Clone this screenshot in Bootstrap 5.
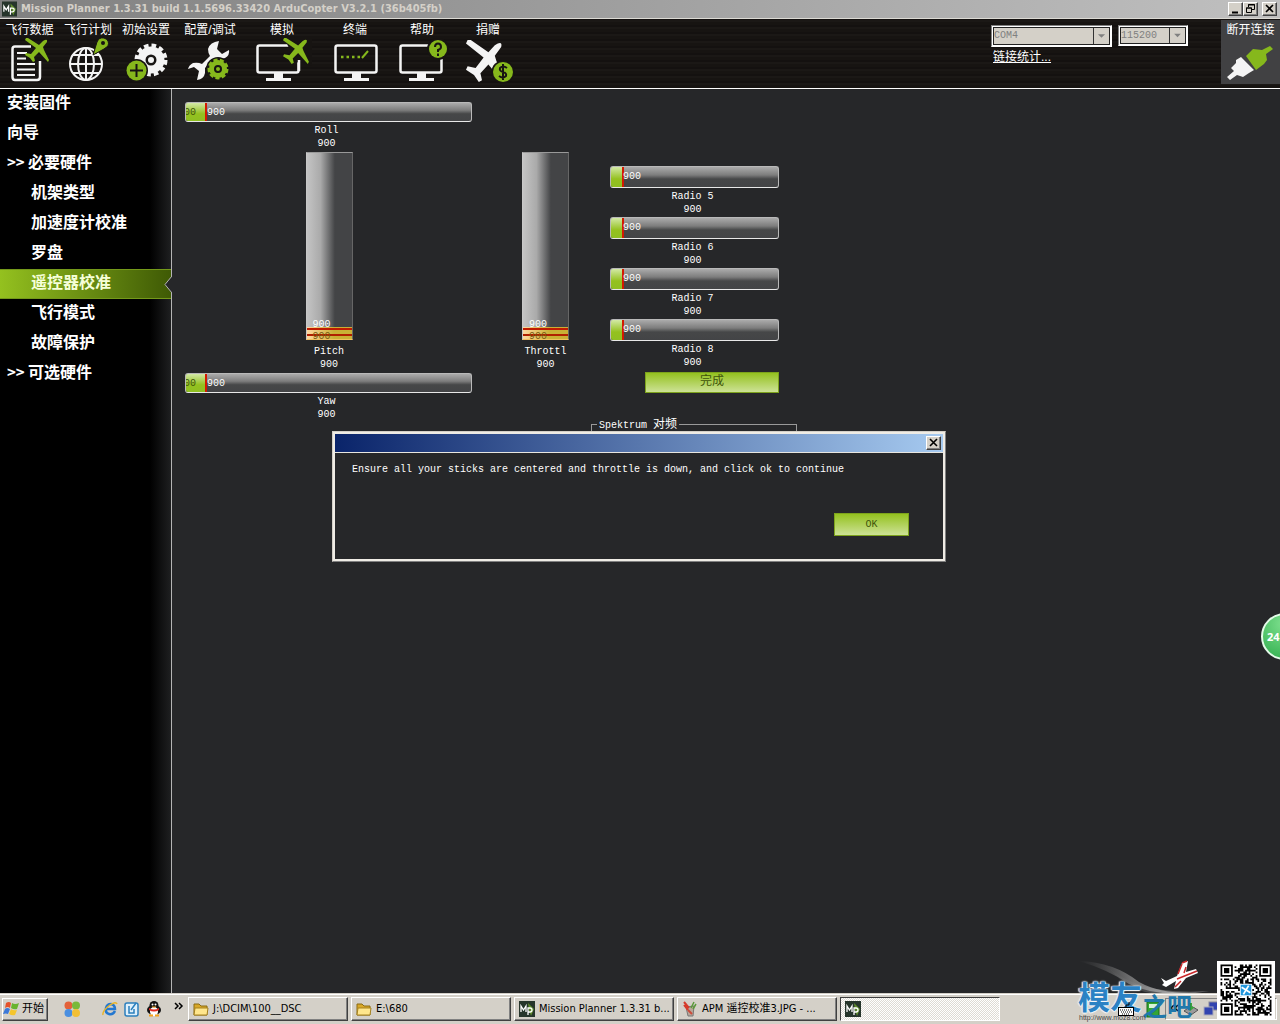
<!DOCTYPE html>
<html lang="zh-CN">
<head>
<meta charset="utf-8">
<meta name="viewport" content="width=device-width, initial-scale=1">
<title>Mission Planner 1.3.31</title>
<link href="https://cdn.jsdelivr.net/npm/bootstrap@5.3.0/dist/css/bootstrap.min.css" rel="stylesheet">
<style>
:root{--face:#d4d0c8;--ui:"DejaVu Sans Condensed","Noto Sans CJK SC",sans-serif;--song:"Liberation Mono","Noto Sans CJK SC",monospace;--cjk:"Liberation Sans","Noto Sans CJK SC",sans-serif}
body{background:#262729;font:12px/16px var(--cjk);color:#fff}
button{border:0;padding:0;background:none;color:inherit;font:inherit}
svg{display:block;flex:none}
.shell{overflow:hidden}
.titlebar{height:19px;background:linear-gradient(90deg,#808080,#c0c0c0);border-bottom:1px solid #dcdad4;padding:0 3px 0 2px}
.titlebar h1{font:bold 11px/18px var(--ui);color:var(--face);margin:0}
.winbtn{width:15px;height:14px;background:var(--face);border:1px solid;border-color:#fff #404040 #404040 #fff;box-shadow:inset -1px -1px #808080}
.toolbar{height:70px;background:repeating-linear-gradient(0deg,#171412 0 3px,#1b1816 3px 5px,#141110 5px 7px);border-bottom:1px solid #fff}
.tool{padding-top:3px;text-align:center;white-space:nowrap}
.tool svg{margin:0 auto}
.t58{width:58px}.t59{width:59px}.t62{width:62px}.t70{width:70px}.t72{width:72px}.t74{width:74px}
.links{width:214px;padding:6px 0 0}
.combo{position:relative;border:1px solid;border-color:#808080 #fff #fff #808080;padding:1px;background:#fff}
.port{width:121px}.baud{width:70px}.pair{gap:6px}
.combo select{appearance:none;display:block;width:100%;height:17px;padding:0;border:1px solid #222;border-radius:0;background:var(--face);color:#808080;font:10px/14px var(--song);opacity:1}
.combo.port select{height:18px}
.combo svg{position:absolute;right:2px;top:2px;height:calc(100% - 4px);width:16px;background:var(--face);border-left:1px solid #333;pointer-events:none}
.stats{display:inline-block;color:#fff;padding:2px 0 0 2px}
.connect{width:59px;height:64px;background:#414143;margin-top:1px;padding-top:2px}
.side{width:172px;background:linear-gradient(90deg,#000 150px,#1d1e1f 170px);border-right:1px solid #b5b5b5}
.side a{display:block;height:30px;padding:0 0 0 7px;font:bold 16px/25px "Noto Sans CJK SC",sans-serif;color:#fff;text-decoration:none;white-space:nowrap}
.side a.sub{padding-left:31px}
.side a.act{position:relative;background:linear-gradient(90deg,#94c11f,#3f5a05);border:solid #74991a;border-width:1px 0;line-height:23px;color:#f6ffd8}
.side a.act svg{position:absolute;right:-1px;top:6px}
.chev{display:inline-block;width:21px;font-size:15px}
.stage{position:relative;font:10px/13px var(--song)}
.panel{padding:13px}
.colroll{width:287px}.colthr{width:47px;margin:50px 22px 0 50px}.colrad{width:206px;padding-top:64px}
.radios{padding:0 18px 0 19px;gap:1px}
.meter{position:relative;height:20px;border:1px solid #b9b9b9;border-bottom-color:#e8e8e8;border-radius:3px;overflow:hidden;background:linear-gradient(#ababab,#7d7d7d 40%,#464748 60%,#434446)}
.radios .meter{height:22px}
.meter i{display:block;height:100%;border-right:2px solid #d21a00;background:linear-gradient(#d3e9a6,#94c11f 60%,#8fbf22)}
.meter span{position:absolute;left:21px;top:3px}
.meter .cut{left:-2px;color:#40540a}
.radios .meter span{left:12px}
.capt{text-align:center;margin-top:2px;padding-right:4px}
.pitch{margin:2px 0;padding-left:1px}
.tower{position:relative;width:47px;height:188px;border:1px solid #999;border-color:#999 #666 #f0c060 #c8c8c8;overflow:hidden;background:linear-gradient(90deg,#c4c4c4,#aaa 30%,#434446 62%,#434446)}
.tower i{position:absolute;left:0;right:0;bottom:0;background:linear-gradient(transparent 0 1px,#c01c00 1px 3px,transparent 3px 7px,#b02000 7px 9px,transparent 9px),linear-gradient(90deg,#ffd8a0,#c9b035 60%)}
.tower span{position:absolute;left:6px;bottom:8px;z-index:1}
.tower .cut{bottom:-4px;color:#7a5a10}
.tower + .capt{margin-top:5px;padding:0;white-space:nowrap}
.green{background:linear-gradient(#94c11f,#cde296);border:1px solid #7da31c;color:#40540a;display:block;text-align:center}
.done{width:134px;height:21px;margin:3px 18px 0 auto;padding-bottom:3px;font:12px/16px var(--cjk)}
.bindbox{height:90px;min-width:0;margin-top:23px;border:1px solid #999;padding:0}
.bindbox legend{float:none;width:auto;margin:0 0 0 5px;padding:0 2px;font:10px/14px var(--song)}
.bindbox legend b{font:12px/14px "Noto Sans CJK SC",sans-serif}
.dlg{position:absolute;left:160px;top:342px;width:614px;height:131px;border:1px solid;border-color:var(--face) #808080 #808080 var(--face);box-shadow:inset 0 0 0 2px #efece5;background:#262729;padding:2px}
.dlgbar{height:19px;background:linear-gradient(90deg,#0a246a,#a6caf0);border-bottom:1px solid #e8e6e0;padding-right:2px}
.dlg p{margin:0;padding:10px 17px 0}
.ok{width:75px;height:23px;margin:37px 34px 0 auto}
.float24{position:absolute;right:-28px;top:613px;width:47px;height:47px;border-radius:50%;border:2px solid #e4fbe9;background:radial-gradient(circle at 50% 20%,#7fe08f,#2fae4d);font:bold 11px/43px "Noto Sans",sans-serif;padding-left:4px;text-align:left}
.taskbar{position:relative;height:30px;background:var(--face);border-top:1px solid #fff;box-shadow:0 -1px #d4d0c8;color:#000;font:11px/18px var(--ui);padding:2px 3px 3px 2px}
.raised{border:1px solid;border-color:#fff #404040 #404040 #fff;box-shadow:inset -1px -1px #808080}
.start{width:46px;height:23px;gap:2px}
.task{width:160px;height:24px;padding:0 4px;white-space:nowrap;gap:4px}
.quick{gap:6px;margin:0 12px 0 22px}
.tasks{gap:3px}
.pressed{border:1px solid;border-color:#404040 #fff #fff #404040;background:repeating-conic-gradient(#fff 0 25%,#dedbd4 0 50%) 0 0/2px 2px}
.kbd{position:relative;z-index:2;top:0}
.tray{width:112px;height:22px;border:1px solid;border-color:#808080 #fff #fff #808080;padding:0 4px;gap:4px}
.mark-art{position:absolute;right:0;bottom:0;z-index:1;width:206px;height:66px;color:#1c75bd;pointer-events:none}
.mark-art span{position:absolute;white-space:nowrap;font-family:"Noto Sans CJK SC",sans-serif;font-weight:bold}
.wm1{left:4px;top:20px;font-size:32px;line-height:34px;color:#2b82c4;text-shadow:0 0 2px #fff,1px 0 1px #d7ecfa,-1px 0 1px #d7ecfa,0 1px 1px #fff}
.wm2{left:68px;top:31px;font-size:25px;line-height:32px;color:#2078ac}
.mark-art .wm3{left:5px;bottom:2px;font:7px/8px "Liberation Sans",sans-serif;color:#444}
.mark-art svg{position:absolute}
.plane{left:0;top:0}
.qr{right:5px;top:3px;background:#fff}
</style>
<script src="https://cdn.jsdelivr.net/npm/bootstrap@5.3.0/dist/js/bootstrap.bundle.min.js"></script>
</head>
<body>
<svg width="0" height="0" class="position-absolute">
<defs>
<path id="jet" d="M1 0L3 0L14 7L18 3Q23 0 22 4L18 9L19 12L24 22L23 24L14 14L9 19L10 23L8 24L5 20L0 17L1 15L6 16L11 10L0 2Z"/>
<g id="mp"><rect width="16" height="16" fill="#26352b"/><path d="M9 2L15 8L12 15L10 9Z" fill="#5f8c2c"/><path d="M2 11V5L4.500 9L7 5V11M9 14V7H11Q13 7 13 9T11 11H9" fill="none" stroke="#fff" stroke-width="1.300"/></g>
<g id="screen"><rect x="1.500" y="1.500" width="41" height="27" rx="2" fill="none" stroke="#f4f4f4" stroke-width="2.500"/><path d="M18 29H27V34H35V37H10V34H18Z" fill="#f4f4f4"/></g>
<g id="folder"><path d="M1 3H6L8 5H14V14H1Z" fill="#d9a827" stroke="#8a6a12"/><path d="M2 7H15L14 14H1Z" fill="#ffe68c" stroke="#a68220"/></g>
</defs></svg>
<div class="shell position-relative d-flex flex-column min-vh-100">
<header>
<div class="titlebar d-flex align-items-center">
<svg class="me-1" width="15" height="16" viewBox="0 0 16 16"><use href="#mp"/></svg>
<h1 class="flex-grow-1 text-nowrap">Mission Planner 1.3.31 build 1.1.5696.33420 ArduCopter V3.2.1 (36b405fb)</h1>
<button class="winbtn" aria-label="最小化"><svg width="13" height="12"><path d="M3 9.500H9" stroke="#000" stroke-width="2"/></svg></button>
<button class="winbtn me-1" aria-label="还原"><svg width="13" height="12"><path d="M4.500 4V1.500H10.500V6.500H8M4 2H11M2.500 5H7.500V9.500H2.500ZM2 5H8" fill="none" stroke="#000"/></svg></button>
<button class="winbtn" aria-label="关闭"><svg width="13" height="12"><path d="M3 2L10 9M10 2L3 9" stroke="#000" stroke-width="1.600"/></svg></button>
</div>
<nav class="toolbar d-flex align-items-start" aria-label="主菜单">
<button class="tool t59">飞行数据<svg width="58" height="46" viewBox="0 38 58 46"><path d="M30 46.500H14Q11.500 46.500 11.500 49V77Q11.500 80 14 80H36Q39 80 39 77V61" fill="none" stroke="#f4f4f4" stroke-width="2.500"/><path d="M16 53H26M16 58.500H25M16 64H34M16 69.500H34M16 75H34" stroke="#f4f4f4" stroke-width="2"/><use href="#jet" transform="translate(24 38)" fill="#86b81c"/></svg></button>
<button class="tool t58">飞行计划<svg width="58" height="46" viewBox="59 38 58 46"><g fill="none" stroke="#f4f4f4" stroke-width="2"><circle cx="86" cy="64" r="16"/><ellipse cx="86" cy="64" rx="8" ry="16"/><path d="M86 48V80M70 64H102M73 55H99M73 73H99"/></g><path d="M93 55L97 42Q99 37 104 38Q110 40 108 46L104 49Z" fill="#86b81c" stroke="#171412"/><circle cx="103" cy="43" r="2" fill="#171412"/></svg></button>
<button class="tool t58">初始设置<svg width="58" height="46" viewBox="117 38 58 46"><circle cx="151" cy="60" r="9.500" fill="none" stroke="#f4f4f4" stroke-width="8"/><circle cx="151" cy="60" r="14.500" fill="none" stroke="#f4f4f4" stroke-width="4" stroke-dasharray="4.600 3"/><circle cx="151" cy="60" r="3" fill="#f4f4f4"/><circle cx="136.500" cy="70.500" r="11.500" fill="#171412"/><circle cx="136.500" cy="70.500" r="10" fill="#86b81c"/><path d="M130 70.500H143M136.500 64V77" stroke="#171412" stroke-width="2"/></svg></button>
<button class="tool t70">配置/调试<svg width="70" height="46" viewBox="175 38 70 46"><path d="M219 41Q210 42 208 49Q208 53 210 56L202 64Q198 62 193 63Q189 65 188 69L194 67L199 71L197 80Q204 79 205 73V68L213 59Q220 60 225 58Q230 55 229 50L222 54L217 49Z" fill="#f4f4f4"/><circle cx="218" cy="69" r="12" fill="#171412"/><circle cx="218" cy="69" r="6.500" fill="none" stroke="#86b81c" stroke-width="5"/><circle cx="218" cy="69" r="9" fill="none" stroke="#86b81c" stroke-width="3" stroke-dasharray="4 2.280"/><circle cx="218" cy="69" r="2" fill="#86b81c"/></svg></button>
<button class="tool t74">模拟<svg width="74" height="46" viewBox="245 38 74 46"><use href="#screen" x="256" y="44"/><path d="M284 38L312 36V66L296 62Z" fill="#171412"/><path d="M299 60V71" stroke="#f4f4f4" stroke-width="2.500"/><use href="#jet" transform="translate(283 38) scale(1.080)" fill="#86b81c"/></svg></button>
<button class="tool t72">终端<svg width="72" height="46" viewBox="319 38 72 46"><use href="#screen" x="334" y="44"/><path d="M341 57H360" stroke="#86b81c" stroke-width="2.500" stroke-dasharray="2.500 3"/><path d="M362 58L368 51" stroke="#86b81c" stroke-width="2"/></svg></button>
<button class="tool t62">帮助<svg width="62" height="46" viewBox="391 38 62 46"><use href="#screen" x="399" y="44"/><circle cx="438" cy="49" r="11" fill="#171412"/><circle cx="438" cy="49" r="9" fill="#86b81c"/><path d="M435 47Q435 43.500 438 43.500T441 47Q441 49 438 50V52M438 53.500V56" fill="none" stroke="#171412" stroke-width="2"/></svg></button>
<button class="tool t70">捐赠<svg width="70" height="46" viewBox="453 38 70 46"><use href="#jet" transform="translate(466 40) scale(1.600 1.750)" fill="#f4f4f4"/><circle cx="503" cy="72" r="11.500" fill="#171412"/><circle cx="503" cy="72" r="10" fill="#86b81c"/><path d="M507 68Q503 65 500 68Q499 71 503 72Q507 73 506 76Q503 79 499 76M503 64V80" fill="none" stroke="#171412" stroke-width="2"/></svg></button>
<div class="links ms-auto me-3">
<div class="pair d-flex align-items-start">
<div class="combo port"><select disabled aria-label="端口"><option>COM4</option></select><svg viewBox="0 0 16 18"><path d="M4 7H12L8 11Z" fill="#808080"/></svg></div>
<div class="combo baud"><select disabled aria-label="波特率"><option>115200</option></select><svg viewBox="0 0 16 18"><path d="M4 7H12L8 11Z" fill="#808080"/></svg></div>
</div>
<a class="stats" href="#">链接统计...</a>
</div>
<button class="connect">断开连接<svg width="59" height="46" viewBox="1221 38 59 46"><path d="M1227 77L1234 71L1231 68L1236 63L1236 60L1241 57L1254 70L1249 73L1243 77L1237 75L1230 80Z" fill="#f4f4f4"/><path d="M1246 56L1253 49L1262 50L1270 46L1273 49L1266 54L1267 60L1264 64L1256 70Z" fill="#86b81c"/></svg></button>
</nav>
</header>
<main class="d-flex flex-grow-1">
<nav class="side flex-shrink-0" aria-label="设置">
<a href="#">安装固件</a><a href="#">向导</a>
<a href="#"><span class="chev">&gt;&gt;</span>必要硬件</a>
<a class="sub" href="#">机架类型</a><a class="sub" href="#">加速度计校准</a><a class="sub" href="#">罗盘</a>
<a class="sub act" href="#" aria-current="page">遥控器校准<svg width="8" height="17"><path d="M8 0L1 8.500L8 17Z" fill="#262729"/><path d="M8 0L1 8.500L8 17" fill="none" stroke="#b5b5b5"/></svg></a>
<a class="sub" href="#">飞行模式</a><a class="sub" href="#">故障保护</a>
<a href="#"><span class="chev">&gt;&gt;</span>可选硬件</a>
</nav>
<section class="stage flex-grow-1">
<div class="panel d-flex align-items-start">
<div class="colroll">
<div class="meter"><i style="width:7.4%"></i><span class="cut">00</span><span>900</span></div>
<div class="capt">Roll<br>900</div>
<div class="pitch d-flex flex-column align-items-center">
<div class="tower"><span>900</span><i style="height:12px"></i><span class="cut">900</span></div>
<div class="capt">Pitch<br>900</div>
</div>
<div class="meter"><i style="width:7.4%"></i><span class="cut">00</span><span>900</span></div>
<div class="capt">Yaw<br>900</div>
</div>
<div class="colthr">
<div class="tower"><span>900</span><i style="height:12px"></i><span class="cut">900</span></div>
<div class="capt">Throttl<br>900</div>
</div>
<div class="colrad">
<div class="radios d-flex flex-column">
<div><div class="meter"><i style="width:8%"></i><span>900</span></div><div class="capt">Radio 5<br>900</div></div>
<div><div class="meter"><i style="width:8%"></i><span>900</span></div><div class="capt">Radio 6<br>900</div></div>
<div><div class="meter"><i style="width:8%"></i><span>900</span></div><div class="capt">Radio 7<br>900</div></div>
<div><div class="meter"><i style="width:8%"></i><span>900</span></div><div class="capt">Radio 8<br>900</div></div>
</div>
<button class="green done">完成</button>
<fieldset class="bindbox"><legend>Spektrum <b>对频</b></legend></fieldset>
</div>
</div>
<div class="dlg" role="dialog" aria-label="提示">
<div class="dlgbar d-flex align-items-center justify-content-end"><button class="winbtn" aria-label="关闭"><svg width="13" height="12"><path d="M3 2L10 9M10 2L3 9" stroke="#000" stroke-width="1.600"/></svg></button></div>
<p>Ensure all your sticks are centered and throttle is down, and click ok to continue</p>
<button class="green ok">OK</button>
</div>
</section>
</main>
<button class="float24">24</button>
<footer class="taskbar d-flex align-items-center">
<button class="start raised d-flex align-items-center"><svg width="17" height="16" viewBox="0 0 17 16"><path d="M3 2Q6 0 8 2L7 7Q5 5 2 7Z" fill="#e5512a"/><path d="M9 2Q12 4 16 2L14 8Q11 9 8 7Z" fill="#68b42e"/><path d="M2 8Q4 6 7 8L5 13Q3 12 0 13Z" fill="#3b78d8"/><path d="M8 8Q11 10 14 9L12 14Q9 15 6 13Z" fill="#f5c52c"/></svg>开始</button>
<svg class="ms-3" width="16" height="16"><circle cx="4.500" cy="4.500" r="4" fill="#e3613a"/><circle cx="12" cy="4.500" r="4" fill="#79b93a"/><circle cx="4.500" cy="12" r="4" fill="#4a8fe0"/><circle cx="12" cy="12" r="4" fill="#f2bf35"/></svg>
<div class="quick d-flex">
<svg width="16" height="16"><path d="M13 10Q11 14 7 13Q3 12 4 7Q5 3 9 3Q13 4 13 8H5" fill="none" stroke="#2478d0" stroke-width="2.500"/><path d="M1 14Q0 10 8 4Q14 0 15 3" fill="none" stroke="#e8b52c" stroke-width="1.500"/></svg>
<svg width="16" height="16"><rect x="1" y="2" width="13" height="13" rx="2" fill="#dff0fb" stroke="#2b7fbd" stroke-width="1.500"/><path d="M5 5V12H10V8M7 9L12 2" fill="none" stroke="#2b7fbd" stroke-width="1.500"/></svg>
<svg width="16" height="16"><ellipse cx="8" cy="9" rx="7" ry="5" fill="#111"/><circle cx="8" cy="4.500" r="4.500" fill="#111"/><ellipse cx="8" cy="10.500" rx="4" ry="4.500" fill="#fff"/><path d="M3 7Q8 10 13 7V9Q8 12 3 9Z" fill="#e02a22"/><path d="M5.500 5.500H10.500L8 7Z" fill="#f6a21c"/><path d="M3 14.500H7M9 14.500H13" stroke="#f6a21c" stroke-width="2"/><circle cx="6.500" cy="3.500" r="1" fill="#fff"/><circle cx="9.500" cy="3.500" r="1" fill="#fff"/></svg>
</div>
<svg class="me-1" width="10" height="16"><path d="M1 2L4 5L1 8M5 2L8 5L5 8" fill="none" stroke="#000" stroke-width="1.500"/></svg>
<div class="tasks d-flex">
<button class="task raised d-flex align-items-center"><svg width="16" height="16"><use href="#folder"/></svg>J:\DCIM\100__DSC</button>
<button class="task raised d-flex align-items-center"><svg width="16" height="16"><use href="#folder"/></svg>E:\680</button>
<button class="task raised d-flex align-items-center"><svg width="16" height="16"><use href="#mp"/></svg>Mission Planner 1.3.31 b...</button>
<button class="task raised d-flex align-items-center"><svg width="16" height="16"><path d="M4 6L12 5L11 15H6Z" fill="#b9a79a" stroke="#777"/><path d="M2 1L7 7M2 4L6 9" stroke="#d63a2a" stroke-width="2"/><path d="M9 7L12 1M11 8L14 3" stroke="#5a9a3a" stroke-width="1.500"/><path d="M6 9L10 13" stroke="#cc4a3a" stroke-width="2"/></svg>APM 遥控校准3.JPG - ...</button>
<button class="task pressed d-flex align-items-center" aria-label="Mission Planner"><svg width="16" height="16"><use href="#mp"/></svg></button>
</div>
<svg class="kbd ms-auto me-2" width="16" height="16"><path d="M8 7V4H11V1" fill="none" stroke="#000"/><rect x=".5" y="6.500" width="15" height="8" fill="#fff" stroke="#000"/><path d="M2 9H14M3 11H14M4 13H12" stroke="#000" stroke-dasharray="1 1"/></svg>
<svg class="ms-1 me-1" width="15" height="17"><rect x="1" y="1" width="12" height="15" fill="#35a535" stroke="#1c6c1c"/><rect x="3" y="3" width="8" height="4" fill="#d9f4d9"/></svg>
<div class="tray d-flex align-items-center"><svg width="9" height="10"><path d="M4 1L1 4L4 7M8 1L5 4L8 7" fill="none" stroke="#000" stroke-width="1.500"/></svg><svg width="16" height="16"><path d="M1 10L8 5L15 9L8 14Z" fill="#9a9a9a" stroke="#555"/><path d="M5 2H9V6H12L7 10L3 6H5Z" fill="#39a339"/></svg><svg width="16" height="16"><rect x="6" y="1" width="9" height="8" fill="#3244b0" stroke="#889"/><rect x="1" y="6" width="9" height="8" fill="#3244b0" stroke="#aab"/></svg></div>
</footer>
<div class="mark-art">
<svg class="plane" width="140" height="45"><defs><linearGradient id="sw"><stop offset="0" stop-color="#777" stop-opacity="0"/><stop offset=".5" stop-color="#aaa" stop-opacity=".6"/><stop offset="1" stop-color="#eee" stop-opacity=".6"/></linearGradient></defs><path d="M5 3Q40 4 65 24Q85 35 115 35Q80 38 55 26Q35 12 5 3Z" fill="url(#sw)"/><path d="M30 5Q60 38 135 33Q80 43 50 26Z" fill="url(#sw)" opacity=".6"/><path d="M87 20L92 23L103 18L108 5L114 3L112 14L122 11L124 15L112 20L104 30L100 31L102 23L92 29L88 27L90 25Z" fill="#fff"/><path d="M108 5L113 3M108 6L104 16M112 9L110 15M103 21L123 13M101 29L107 23" fill="none" stroke="#c8282a" stroke-width="1.500"/></svg>
<span class="wm1">模友</span><span class="wm2">之吧</span><span class="wm3">http://www.moz8.com</span>
<svg class="qr" width="58" height="58" viewBox="-2 -2 33 33"><path id="qrdots" d=""/><rect x="11" y="11" width="7" height="7" fill="#fff"/><rect x="11.500" y="11.500" width="6" height="6" fill="#2196dc"/><path d="M12 13L17 16M13 17L16 12" stroke="#fff"/></svg>
</div>
</div>
<script>
// Fill the 29-module code: three finder squares, then a seeded module pattern.
let seed = 7, d = "";
const finder = (x, y) => {
  for (const [a, b] of [[0, 0], [22, 0], [0, 22]]) {
    const i = x - a, j = y - b;
    if (i >= -1 && i <= 7 && j >= -1 && j <= 7) {
      const r = Math.max(Math.abs(i - 3), Math.abs(j - 3));
      return r === 3 || r <= 1;
    }
  }
  return null;
};
for (let y = 0; y < 29; y++) for (let x = 0; x < 29; x++) {
  seed = (seed * 16807) % 2147483647;
  const f = finder(x, y);
  if (f === null ? seed % 100 < 50 : f) d += `M${x} ${y}h1v1h-1z`;
}
document.getElementById("qrdots").setAttribute("d", d);
</script>
</body>
</html>
